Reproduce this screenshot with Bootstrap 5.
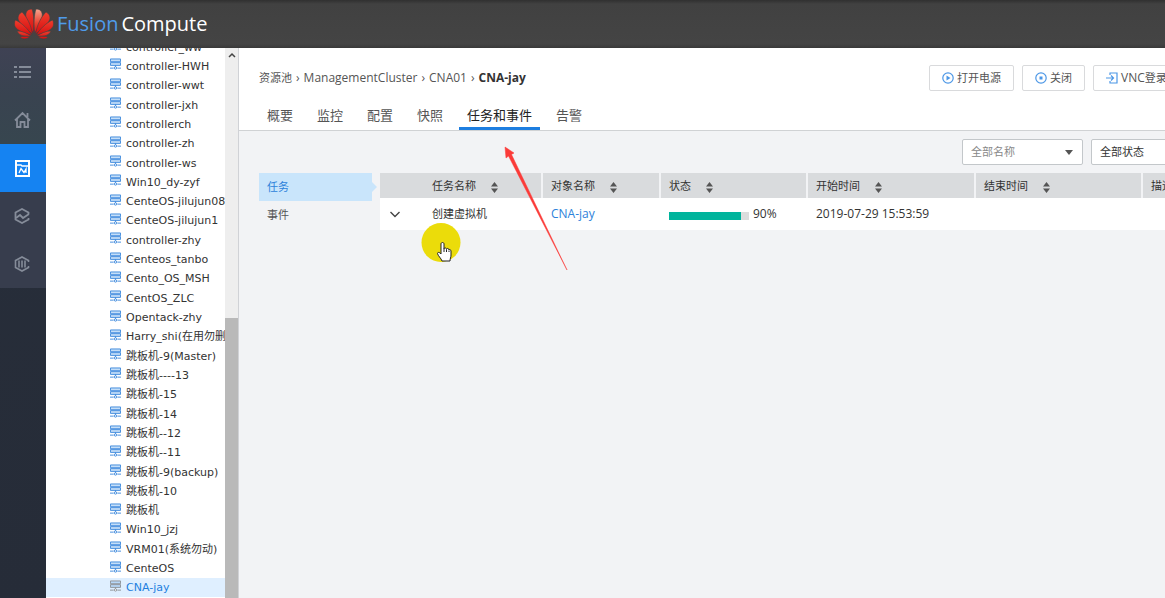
<!DOCTYPE html>
<html lang="zh-CN">
<head>
<meta charset="utf-8">
<meta name="viewport" content="width=device-width, initial-scale=1">
<title>FusionCompute</title>
<link rel="stylesheet" href="https://cdn.jsdelivr.net/npm/bootstrap@5.3.0/dist/css/bootstrap.min.css">
<style>
body{font:12px/16px "Open Sans","Noto Sans CJK SC",sans-serif;color:#333;background:#f2f3f5}
a{text-decoration:none}
.topbar{height:48px;background:linear-gradient(#303030,#414141 4px,#444 44px,#393939);padding-left:14px}
.brand-name{font:20px/24px "Open Sans",sans-serif;color:#fff;gap:3px;margin-left:3px}
.brand-name span:first-child{color:#4f9bea}
.rail{width:46px;background:linear-gradient(160deg,#272e3a,#262c38)}
.rail a{height:48px;color:#858c99;background:#373d4d;padding-right:2px}
.rail a.top-item{background:linear-gradient(#3f4254,#394350)}
.rail a.top-item + a.top-item{background:linear-gradient(#394350,#37464f)}
.rail a.active{background:#1583f2;color:#fff}
.tree-pane{width:193px;background:#fff;border-right:1px solid #d0d2d6}
.tree{margin:-11px 0 1px;font:11px/19px "DejaVu Sans","Noto Sans CJK SC",sans-serif}
.tree li{min-height:19px;padding-left:64px;gap:5px}
.tree li.active{background:#dfefff}
.tree a{color:#333;padding-top:1px}
.tree svg{color:#3b88dc;margin-bottom:3px}
.tree .active a{color:#1e7fe0}
.tree .active svg{color:#8b8f94}
.scroll-track{width:13px;background:#eee}
.scroll-thumb{height:51%;background:#b9b9b9}
.wide{margin-right:-67px}
.page-head{background:#fff;border-bottom:1px solid #d0d2d4;padding:17px 20px 0}
.crumbs{gap:4px}
.crumbs a,.crumbs .sep{color:#555}
.cjk{font-size:11px}
.btn-tool{--bs-btn-font-size:12px;--bs-btn-line-height:16px;--bs-btn-padding-x:12px;--bs-btn-padding-y:4px;--bs-btn-border-radius:2px;--bs-btn-border-color:#d9dadc;--bs-btn-color:#555;--bs-btn-bg:#fff;height:26px;gap:3px}
.btn-tool svg{color:#4c97e6}
.btn-tool.vnc{width:119px}
.view-tabs{gap:24px;margin-top:14px;font-size:13px;line-height:20px;padding-left:8px}
.view-tabs a{color:#555;padding-bottom:2px;border-bottom:3px solid transparent}
.view-tabs a.active{color:#222;border-color:#1d7ee0;padding-left:8px;padding-right:8px;margin:0 -8px}
.filters{gap:8px;padding:8px 20px}
.form-select.pick{width:121px;height:26px;font-size:11px;line-height:16px;padding:3px 8px;border:1px solid #c3c7ca;border-radius:2px;color:#333;background:#fff}
.pick-wrap{position:relative}
.pick-wrap::after{content:"";position:absolute;right:10px;top:11px;border:4px solid transparent;border-top:5px solid #555;border-bottom:0}
.form-select.pick.muted{color:#888}
.work{padding:0 20px;gap:7px}
.side-menu{width:114px;flex:none}
.side-menu a{height:28px;padding:6px 8px;font-size:11px;color:#555;margin-right:1px}
.side-menu a.active{background:#c9e5fb;color:#2d82da;position:relative}
.side-menu a.active::after{content:"";position:absolute;left:100%;top:9px;border:5px solid transparent;border-left:5px solid #c9e5fb;border-right:0}
.task-table{table-layout:fixed;margin:0;--bs-table-bg:#fff}
.task-table th{background:#d9dbdd;font-weight:400;font-size:11px;line-height:16px;padding:5px 8px 4px;border:0;border-left:2px solid #f2f3f5;color:#333;white-space:nowrap}
.task-table th:first-child{border-left:0;padding-left:52px}
.task-table td{border:0;padding:8px 8px 8px 9px;color:#333;line-height:16px;white-space:nowrap}
.task-table td:first-child{padding-left:10px}
.task-table td a{color:#2d82da}
.task-table svg.sort{margin-left:15px;fill:#555}
.task-line{gap:32px}
.c1{width:162px}.c2{width:118px}.c3{width:147px}.c4{width:168px}.c5{width:167px}
.task-table .progress{width:80px;height:8px;border-radius:0;background:#dcdddd;margin-top:3px}
.task-table .progress-bar{background:#00b49c}
.note-arrow{position:absolute;left:504px;top:146px}
.pointer-mark{position:absolute;left:421px;top:223px}
.min0{min-width:0}
</style>
</head>
<body class="vh-100 d-flex flex-column overflow-hidden position-relative">
<svg class="d-none" aria-hidden="true">
<symbol id="vm" viewBox="0 0 12 12"><path fill="#9cc8f3" fill-opacity=".6" stroke="currentColor" d="M.5.5h11v3H.5zM.5 4.500h11v3H.5z"/><path fill="none" stroke="currentColor" d="M6 7.500v2M0 10.500h4M8 10.500h4"/><circle cx="6" cy="10.300" r="1.300" fill="#fff" stroke="currentColor"/></symbol>
<symbol id="sorter" viewBox="0 0 7 11"><path d="M3.500 0 7 4.500H0zM3.500 11 7 6.500H0z"/></symbol>
</svg>

<header class="topbar d-flex align-items-center flex-shrink-0">
<svg width="40" height="32" viewBox="0 0 40 32" aria-label="Logo"><defs>
<linearGradient id="petalLight" x2="0" y2="1"><stop stop-color="#f7a58f"/><stop offset=".6" stop-color="#e8402f"/><stop offset="1" stop-color="#d50f12"/></linearGradient>
<linearGradient id="petalRed" x2="0" y2="1"><stop stop-color="#f0402e"/><stop offset="1" stop-color="#d50d10"/></linearGradient></defs>
<g stroke="#424242" stroke-width=".6">
<path fill="url(#petalRed)" d="M19.300 25C13 17 11 9 12 5c1-3 3-4 6-4 2 6 2.500 15 1.300 24z"/>
<path fill="url(#petalLight)" d="M20.700 25C19.500 16 20 7 22 1c3 0 5 1 6 4 1 4-1 12-7.300 20z"/>
<g fill="url(#petalRed)"><path d="M18.500 26C10 20 4 14 4 10c0-3 2-5 4-6 5 5 9 13 10.500 22z"/><path d="M21.500 26C23 17 27 9 32 4c2 1 4 3 4 6 0 4-6 10-14.500 16z"/><path d="M17.800 27C8 25 1 21 .500 17c0-2 0-4 1-5C8 15 14 21 17.800 27z"/><path d="M22.200 27C26 21 32 15 38.500 12c1 1 1 3 1 5-.5 4-7.500 8-17.300 10z"/><path d="M17 28c-5 1-12 0-14-5 5 0 10 2 14 5zM23 28c5 1 12 0 14-5-5 0-10 2-14 5zM16 28.500c-2 2-7 4-10 .5 3-1 7-1 10-.5zM24 28.500c2 2 7 4 10 .5-3-1-7-1-10-.5z"/></g></g>
</svg>
<div class="brand-name d-flex"><span>Fusion</span><span>Compute</span></div>
</header>

<div class="d-flex flex-fill overflow-hidden">
<nav class="rail flex-shrink-0" aria-label="主导航">
<a href="#" class="top-item d-flex align-items-center justify-content-center" aria-label="菜单"><svg width="17" height="14" viewBox="0 0 17 14" fill="none" stroke="currentColor" stroke-width="2"><path d="M0 2h3M5 2h12M0 7h3M5 7h12M0 12h3M5 12h12"/></svg></a>
<a href="#" class="top-item d-flex align-items-center justify-content-center" aria-label="首页"><svg width="17" height="18" viewBox="0 0 17 18" fill="none" stroke="currentColor" stroke-width="1.800"><path d="M1 9.500 8.500 2 16 9.500M3 8v8h3.500v-5h4v5H14V8M13.500 6V2"/></svg></a>
<a href="#" class="active d-flex align-items-center justify-content-center" aria-label="资源池"><svg width="15" height="17" viewBox="0 0 15 17" fill="none" stroke="currentColor" stroke-width="2"><path d="M1 1h13v15H1z"/><path stroke-width="1.300" d="M2 5h4l1 1h6M4 13l2-4.500 3 4L11 9v4"/></svg></a>
<a href="#" class="d-flex align-items-center justify-content-center" aria-label="监控"><svg width="16" height="16" viewBox="0 0 16 16" fill="none" stroke="currentColor" stroke-width="1.800"><path d="M14.500 6V4.500L8 1 1.500 4.500v7L8 15l6.500-3.500V10"/><path d="m2 10 4-3 3 3 6-4"/></svg></a>
<a href="#" class="d-flex align-items-center justify-content-center" aria-label="系统"><svg width="16" height="16" viewBox="0 0 16 16" fill="none" stroke="currentColor" stroke-width="1.600"><path d="M14.500 6V4.500L8 1 1.500 4.500v7L8 15l6.500-3.500V10M5 4.500v7M8 4.500v7M11 4.500v7"/></svg></a>
</nav>

<aside class="tree-pane d-flex flex-shrink-0 overflow-hidden">
<ul class="tree list-unstyled d-flex flex-column flex-fill overflow-hidden" id="vmTree"></ul>
<div class="scroll-track d-flex flex-column justify-content-between align-items-center flex-shrink-0" aria-hidden="true">
<svg class="mt-1" width="8" height="7" viewBox="0 0 8 7" fill="none" stroke="#444" stroke-width="1.500"><path d="m1 5 3-3 3 3"/></svg>
<div class="scroll-thumb w-100"></div></div>
</aside>

<main class="flex-fill min0 overflow-hidden">
<div class="wide">
<div class="page-head">
<div class="d-flex justify-content-between align-items-center">
<nav class="crumbs d-flex align-items-center" aria-label="路径"><a href="#" class="cjk">资源池</a><span class="sep">›</span><a href="#">ManagementCluster</a><span class="sep">›</span><a href="#">CNA01</a><span class="sep">›</span><strong>CNA-jay</strong></nav>
<div class="d-flex gap-2">
<button type="button" class="btn btn-tool d-flex align-items-center"><svg width="12" height="12" viewBox="0 0 12 12" fill="none" stroke="currentColor" stroke-width="1.200"><circle cx="6" cy="6" r="5.200"/><path fill="currentColor" stroke="none" d="m4.500 3.500 4 2.500-4 2.500z"/></svg><span class="cjk">打开电源</span></button>
<button type="button" class="btn btn-tool d-flex align-items-center"><svg width="12" height="12" viewBox="0 0 12 12" fill="none" stroke="currentColor" stroke-width="1.200"><circle cx="6" cy="6" r="5.200"/><path fill="currentColor" stroke="none" d="M4.500 4.500h3v3h-3z"/></svg><span class="cjk">关闭</span></button>
<button type="button" class="btn btn-tool vnc d-flex align-items-center"><svg width="12" height="12" viewBox="0 0 12 12" fill="none" stroke="currentColor" stroke-width="1.200"><path d="M4 3V1h7v10H4V9M0 6h7M5 3.500 7.500 6 5 8.500"/></svg><span>VNC<span class="cjk">登录</span></span></button>
</div></div>
<nav class="view-tabs d-flex" aria-label="视图"><a href="#">概要</a><a href="#">监控</a><a href="#">配置</a><a href="#">快照</a><a href="#" class="active" aria-current="page">任务和事件</a><a href="#">告警</a></nav>
</div>
<div class="filters d-flex justify-content-end">
<div class="pick-wrap"><select class="form-select pick muted" aria-label="名称"><option>全部名称</option></select></div>
<div class="pick-wrap"><select class="form-select pick" aria-label="状态"><option>全部状态</option></select></div>
</div>
<div class="work d-flex">
<nav class="side-menu" aria-label="任务和事件"><a href="#" class="active d-block">任务</a><a href="#" class="d-block">事件</a></nav>
<div class="flex-fill min0">
<table class="table task-table">
<thead><tr>
<th class="c1">任务名称<svg class="sort" width="7" height="11"><use href="#sorter"/></svg></th>
<th class="c2">对象名称<svg class="sort" width="7" height="11"><use href="#sorter"/></svg></th>
<th class="c3">状态<svg class="sort" width="7" height="11"><use href="#sorter"/></svg></th>
<th class="c4">开始时间<svg class="sort" width="7" height="11"><use href="#sorter"/></svg></th>
<th class="c5">结束时间<svg class="sort" width="7" height="11"><use href="#sorter"/></svg></th>
<th>描述</th></tr></thead>
<tbody><tr>
<td><div class="task-line d-flex align-items-center"><svg width="10" height="7" viewBox="0 0 10 7" fill="none" stroke="#444" stroke-width="1.400"><path d="m.5 1 4.500 4.500L9.500 1"/></svg><span class="cjk">创建虚拟机</span></div></td>
<td><a href="#">CNA-jay</a></td>
<td><div class="d-flex align-items-center gap-1"><div class="progress" role="progressbar" aria-valuenow="90" aria-valuemin="0" aria-valuemax="100" aria-label="创建虚拟机"><div class="progress-bar" style="width:90%"></div></div>90%</div></td>
<td>2019-07-29 15:53:59</td><td></td><td></td></tr></tbody>
</table></div></div>
</div>
</main>
</div>

<svg class="note-arrow pe-none" width="64" height="125" viewBox="0 0 64 125" aria-hidden="true"><path fill="#fb3b38" stroke="#fb3b38" stroke-width=".5" d="m1 1 9 6-2.500 1.500L63 124 4.500 10 2 12z"/></svg>
<svg class="pointer-mark pe-none" width="40" height="40" viewBox="0 0 40 40" aria-hidden="true"><circle cx="20" cy="19.500" r="19.500" fill="#ebdc0a"/><path fill="#fff" stroke="#222" stroke-linejoin="round" d="M20 31V21c0-2 3-2 3 0v5c0-1.500 2.500-1.500 2.500.5 0-1.500 2.500-1.500 2.500.5 0-1 2-.5 2 1v4c0 3-1 3-1 6h-8c-1-3-4-5-4.500-7.500 0-1.500 2-1.500 3.500.5z"/><path stroke="#222" d="M23 26v3M25.500 27v2M28 27.500V29"/></svg>

<script src="https://cdn.jsdelivr.net/npm/bootstrap@5.3.0/dist/js/bootstrap.bundle.min.js"></script>
<script>
const machines = ["controller_ww","controller-HWH","controller-wwt","controller-jxh","controllerch","controller-zh","controller-ws","Win10_dy-zyf","CenteOS-jilujun08","CenteOS-jilujun1","controller-zhy","Centeos_tanbo","Cento_OS_MSH","CentOS_ZLC","Opentack-zhy","Harry_shi(在用勿删)","跳板机-9(Master)","跳板机----13","跳板机-15","跳板机-14","跳板机--12","跳板机--11","跳板机-9(backup)","跳板机-10","跳板机","Win10_jzj","VRM01(系统勿动)","CenteOS","CNA-jay"];
document.getElementById("vmTree").innerHTML = machines.map((m, i) =>
  `<li class="d-flex flex-fill align-items-center text-nowrap${i === machines.length - 1 ? " active" : ""}"><svg class="flex-shrink-0" width="11" height="12"><use href="#vm"/></svg><a href="#">${m}</a></li>`).join("");
</script>
</body>
</html>
